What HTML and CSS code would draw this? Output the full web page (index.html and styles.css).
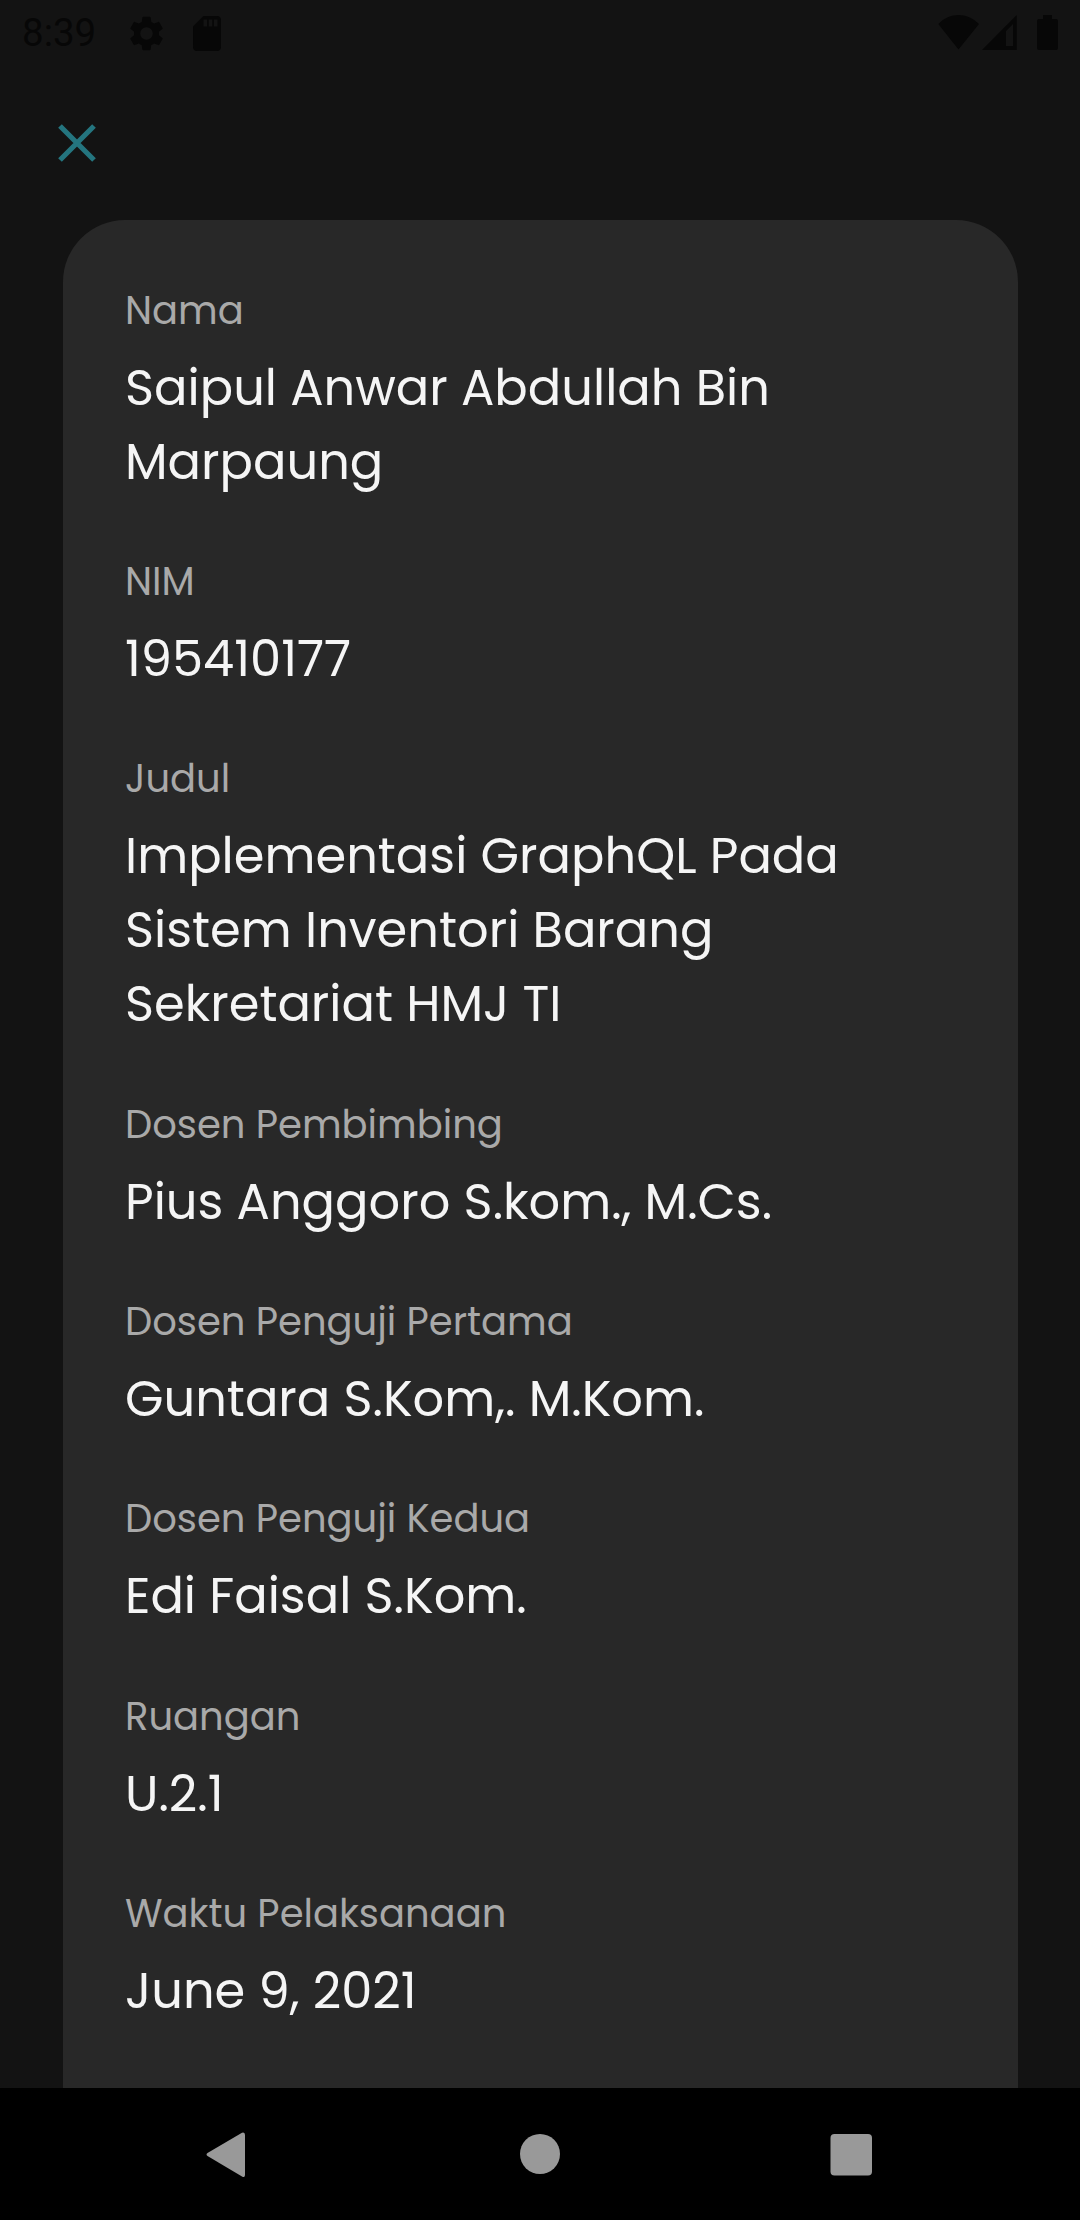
FILE: index.html
```html
<!DOCTYPE html>
<html lang="id">
<head>
<meta charset="utf-8">
<title>Detail</title>
<link rel="stylesheet" href="styles.css">
</head>
<body>
<div class="screen">
  <header class="status">
    <span class="clock">8:39</span>
    <svg class="gear" viewBox="2.500 2 19 20"><path fill-rule="evenodd" d="M19.140 12.940c.04-.3.06-.61.06-.94 0-.32-.02-.64-.07-.94l2.030-1.580c.18-.14.23-.41.12-.61l-1.920-3.320c-.12-.22-.37-.29-.59-.22l-2.390.96c-.5-.38-1.030-.7-1.620-.94l-.36-2.540c-.04-.24-.24-.41-.48-.41h-3.840c-.24 0-.43.17-.47.41l-.36 2.540c-.59.24-1.130.57-1.620.94l-2.390-.96c-.22-.08-.47 0-.59.22L2.740 8.870c-.12.21-.08.47.12.61l2.030 1.580c-.05.3-.09.63-.09.94s.02.64.07.94l-2.030 1.580c-.18.14-.23.41-.12.61l1.920 3.320c.12.22.37.29.59.22l2.390-.96c.5.38 1.030.7 1.620.94l.36 2.540c.05.24.24.41.48.41h3.840c.24 0 .44-.17.47-.41l.36-2.540c.59-.24 1.130-.56 1.620-.94l2.390.96c.22.08.47 0 .59-.22l1.920-3.320c.12-.22.07-.47-.12-.61zM12 15.600A3.600 3.600 0 1 1 12 8.400a3.600 3.600 0 0 1 0 7.200z"/></svg>
    <svg class="sd" viewBox="4 2 16 20"><path fill-rule="evenodd" d="M18 2h-8L4.020 8 4 20c0 1.100.9 2 2 2h12c1.100 0 2-.9 2-2V4c0-1.100-.9-2-2-2zm-6 6h-2V4h2zm3 0h-2V4h2zm3 0h-2V4h2z"/></svg>
    <svg class="system" viewBox="0 0 122 36"><path fill-rule="evenodd" d="M1.300 9C13-3 30-3 42 9L21.500 34.500zM45 35 79.700 0v35zM69 16v15h7V9zM106 4V0h9v4h4q2 0 2 2v27q0 2-2 2h-17q-2 0-2-2V6q0-2 2-2z"/></svg>
  </header>
  <nav class="top">
    <svg class="close" viewBox="0 0 38 38"><path d="M2 2 36 36M36 2 2 36"/></svg>
  </nav>
  <main class="card">
    <dl class="fields">
      <div class="field"><dt>Nama</dt><dd>Saipul Anwar Abdullah Bin Marpaung</dd></div>
      <div class="field"><dt>NIM</dt><dd>195410177</dd></div>
      <div class="field"><dt>Judul</dt><dd>Implementasi GraphQL Pada Sistem Inventori Barang Sekretariat HMJ TI</dd></div>
      <div class="field"><dt>Dosen Pembimbing</dt><dd>Pius Anggoro S.kom., M.Cs.</dd></div>
      <div class="field"><dt>Dosen Penguji Pertama</dt><dd>Guntara S.Kom,. M.Kom.</dd></div>
      <div class="field"><dt>Dosen Penguji Kedua</dt><dd>Edi Faisal S.Kom.</dd></div>
      <div class="field"><dt>Ruangan</dt><dd>U.2.1</dd></div>
      <div class="field"><dt>Waktu Pelaksanaan</dt><dd>June 9, 2021</dd></div>
    </dl>
  </main>
  <footer class="softkeys">
    <svg viewBox="0 0 46 46"><path d="M41 4v40q0 3-3 1.500L3.500 25q-2-1.500 0-3L38 1.700q3-1 3 2.300z"/></svg>
    <svg viewBox="0 0 46 46"><circle cx="24" cy="23" r="20"/></svg>
    <svg viewBox="0 0 46 46"><rect x="2.500" y="3" width="41.500" height="41.500" rx="4"/></svg>
  </footer>
</div>
</body>
</html>
```
FILE: styles.css
```css
* { box-sizing: border-box; }

body {
  margin: 0;
  background: #131313;
  color: #f5f5f5;
  font-family: Poppins, "Open Sans", sans-serif;
}

.screen {
  display: flex;
  flex-direction: column;
  height: 2220px;
  overflow: hidden;
}

.status {
  display: flex;
  align-items: center;
  flex: none;
  height: 66px;
  padding: 0 21px 0 22px;
  fill: #070707;
}

.clock {
  width: 108px;
  color: #070707;
  font: 38.5px/68px Roboto, sans-serif;
}

.gear { width: 33px; height: 35px; }
.sd { width: 28px; height: 35px; margin-left: 30px; }
.system { width: 122px; height: 36px; margin-left: auto; }

.top {
  display: flex;
  align-items: center;
  flex: none;
  height: 154px;
  padding: 0 58px;
}

.close {
  width: 38px;
  height: 38px;
  overflow: visible;
  stroke: #24757f;
  stroke-width: 5.2;
}

.card {
  flex: 1;
  min-height: 0;
  margin: 0 62.5px;
  padding: 61.8px 62.5px 0;
  overflow: hidden;
  background: #282828;
  border-radius: 62px 62px 0 0;
}

.fields { margin: 0; }
.field { margin-bottom: 54.3px; }

dt {
  margin-bottom: 11px;
  color: #a9a9a9;
  font-size: 38.5px;
  line-height: 58px;
}

dd {
  margin: 0;
  font-size: 49.5px;
  line-height: 74px;
}

.softkeys {
  display: flex;
  justify-content: space-between;
  align-items: center;
  flex: none;
  height: 132px;
  padding: 0 206px 0 204px;
  background: #000;
  fill: #999;
}

.softkeys svg { width: 46px; height: 46px; }
```
